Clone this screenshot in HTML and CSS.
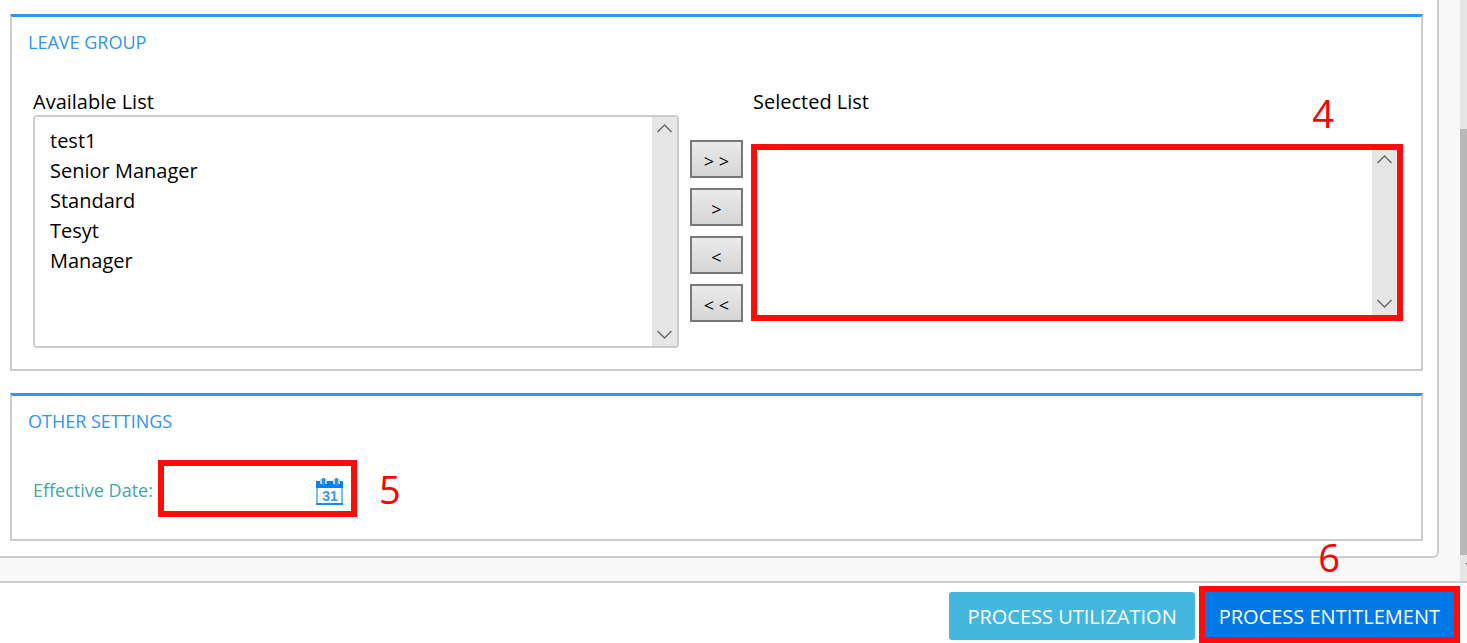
FILE: index.html
```html
<!DOCTYPE html>
<html lang="en">
<head>
  <meta charset="UTF-8" />
  <meta name="viewport" content="width=device-width, initial-scale=1" />
  <title>Process Entitlement</title>
  <link rel="stylesheet" href="styles.css">
</head>
<body>

  <div class="content">
    <main class="panel">

      <section class="group leave-group">
        <h2>Leave Group</h2>
        <div class="lists">
          <div class="available">
            <label for="availableList">Available List</label>
            <div class="list-box">
              <select id="availableList" multiple>
                <option>test1</option>
                <option>Senior Manager</option>
                <option>Standard</option>
                <option>Tesyt</option>
                <option>Manager</option>
              </select>
              <div class="list-scroll">
                <svg width="15" height="9" viewBox="0 0 15 9"><path d="M0.5 8 L7.5 1 L14.5 8" /></svg>
                <svg width="15" height="9" viewBox="0 0 15 9"><path d="M0.5 1 L7.5 8 L14.5 1" /></svg>
              </div>
            </div>
          </div>

          <div class="move-buttons">
            <button type="button" aria-label="Add all">&gt; &gt;</button>
            <button type="button" aria-label="Add">&gt;</button>
            <button type="button" aria-label="Remove">&lt;</button>
            <button type="button" aria-label="Remove all">&lt; &lt;</button>
          </div>

          <div class="selected">
            <label for="selectedList">Selected List</label>
            <span class="step step-list">4</span>
            <div class="list-box highlight">
              <select id="selectedList" multiple></select>
              <div class="list-scroll">
                <svg width="15" height="9" viewBox="0 0 15 9"><path d="M0.5 8 L7.5 1 L14.5 8" /></svg>
                <svg width="15" height="9" viewBox="0 0 15 9"><path d="M0.5 1 L7.5 8 L14.5 1" /></svg>
              </div>
            </div>
          </div>
        </div>
      </section>

      <section class="group other-group">
        <h2>Other Settings</h2>
        <div class="date-row">
          <label for="effectiveDate">Effective Date:</label>
          <div class="date-box highlight">
            <input type="text" id="effectiveDate" />
            <button type="button" aria-label="Pick a date">
              <svg width="27" height="27" viewBox="0 0 27 27">
                <rect x="0" y="3" width="27" height="24" fill="#7dbdf4" />
                <rect x="0" y="3" width="27" height="7" fill="#0a7fe8" />
                <rect x="2" y="10" width="23" height="15" fill="#f8fcff" />
                <rect x="0" y="25" width="27" height="2" fill="#1c88ea" />
                <rect x="4" y="1" width="7" height="5" fill="#b4d8f8" />
                <rect x="17" y="1" width="7" height="5" fill="#b4d8f8" />
                <rect x="6" y="0" width="3" height="8" rx="1" fill="#2d8fe9" />
                <rect x="19" y="0" width="3" height="8" rx="1" fill="#2d8fe9" />
                <text x="14" y="23" text-anchor="middle">31</text>
              </svg>
            </button>
          </div>
          <span class="step">5</span>
        </div>
      </section>

    </main>
    <div class="page-scroll">
      <div class="thumb"></div>
      <div class="page-scroll-end">
        <svg width="7" height="26" viewBox="0 0 7 26"><path d="M5 8 H13 L9 12 Z" fill="#777" /></svg>
      </div>
    </div>
  </div>

  <footer class="actions">
    <span class="step step-process">6</span>
    <button type="button" class="btn btn-info">PROCESS UTILIZATION</button>
    <div class="highlight">
      <button type="button" class="btn btn-primary">PROCESS ENTITLEMENT</button>
    </div>
  </footer>

</body>
</html>
```

FILE: styles.css
```css
* {
  box-sizing: border-box;
}

body {
  margin: 0;
  min-height: 100vh;
  display: flex;
  flex-direction: column;
  background-color: #fff;
  color: #000;
  font-family: 'Open Sans', 'Noto Sans', sans-serif;
  font-size: 20px;
  line-height: 26px;
}

button, input, select {
  font: inherit;
}

.content {
  flex: 1;
  display: flex;
  background-color: #f8f8f8;
}

.panel {
  flex: 1;
  align-self: flex-start;
  margin-right: 21px;
  padding: 14px 14px 15px 10px;
  background-color: #fff;
  border: 2px solid #ccc;
  border-width: 0 2px 2px 0;
  border-radius: 0 0 6px 0;
}

.group {
  border: 2px solid #ccc;
  border-top: 3px solid #3094f2;
}

.group h2 {
  margin: 0;
  padding: 12px 16px;
  color: #3094f2;
  font-size: 18px;
  font-weight: normal;
  text-transform: uppercase;
}

.leave-group {
  margin-bottom: 22px;
}

/* Leave group lists */
.lists {
  display: grid;
  grid-template-columns: 646fr 56px 652fr;
  column-gap: 8px;
  padding: 22px 18px 21px 21px;
}

.available label,
.selected label {
  display: block;
}

.selected label {
  padding-left: 2px;
}

.list-box {
  display: flex;
  height: 233px;
  border: 2px solid #ccc;
  border-radius: 4px;
}

.list-box select {
  flex: 1;
  min-width: 0;
  padding: 10px 15px;
  border: 0;
  outline: 0;
  background-color: #fff;
  color: #000;
  overflow: hidden;
}

.list-box option {
  min-height: 30px;
  padding: 0;
  line-height: 30px;
}

.list-scroll {
  width: 25px;
  display: flex;
  flex-direction: column;
  justify-content: space-between;
  align-items: center;
  padding: 7px 0;
  background-color: #e6e6e6;
}

.list-scroll path {
  fill: none;
  stroke: #666;
  stroke-width: 1.4;
}

.selected {
  position: relative;
}

.highlight {
  border: 6px solid #ff0b0b;
}

.selected .list-box {
  height: 177px;
  margin-top: 29px;
  border: 6px solid #ff0b0b;
  border-radius: 0;
}

.selected .list-scroll {
  padding: 5px 0 7px;
}

.move-buttons {
  display: flex;
  flex-direction: column;
  gap: 10px;
  padding: 51px 0 0 3px;
}

.move-buttons button {
  height: 38px;
  padding: 4px 0 0;
  border: 2px solid #777;
  background-image: linear-gradient(#ebebeb, #d5d5d5);
  color: #000;
  font-size: 18px;
  line-height: 28px;
}

/* Step numbers */
.step {
  color: #ff0000;
  font-size: 38px;
  font-weight: 500;
  line-height: 40px;
}

.step-list {
  position: absolute;
  top: 4px;
  right: 69px;
}

.step-process {
  position: absolute;
  top: -46px;
  right: 127px;
}

/* Effective date */
.date-row {
  display: flex;
  align-items: center;
  padding: 14px 21px 22px;
}

.date-row label {
  width: 125px;
  padding-top: 2px;
  color: #45a5a8;
  font-size: 18px;
  white-space: nowrap;
}

.date-box {
  display: flex;
  align-items: center;
  width: 199px;
  height: 57px;
  margin-right: 22px;
  padding-right: 8px;
}

.date-box input {
  flex: 1;
  min-width: 0;
  height: 40px;
  border: 0;
  outline: 0;
}

.date-box button {
  display: flex;
  padding: 6px 0 0;
  border: 0;
  background: none;
}

.date-box text {
  fill: #3b97e8;
  font-family: 'Liberation Sans', sans-serif;
  font-size: 14px;
  font-weight: bold;
}

/* Page scrollbar */
.page-scroll {
  width: 7px;
  display: flex;
  flex-direction: column;
  padding-top: 129px;
  background-color: #e6e6e6;
}

.page-scroll .thumb {
  flex: 1;
  background-color: #b8b8b8;
}

.page-scroll-end {
  height: 26px;
}

/* Footer */
.actions {
  position: relative;
  display: flex;
  justify-content: flex-end;
  align-items: center;
  gap: 4px;
  padding: 3px 7px 0;
  border-top: 2px solid #ccc;
}

.btn {
  display: block;
  height: 48px;
  padding: 2px 18px 0;
  border: 0;
  border-radius: 3px;
  color: #fff;
}

.btn-info {
  margin-top: 2px;
  background-color: #43b7dd;
}

.btn-primary {
  height: 45px;
  padding: 4px 14px 0;
  border-radius: 0;
  background-color: #0078e8;
}
```
